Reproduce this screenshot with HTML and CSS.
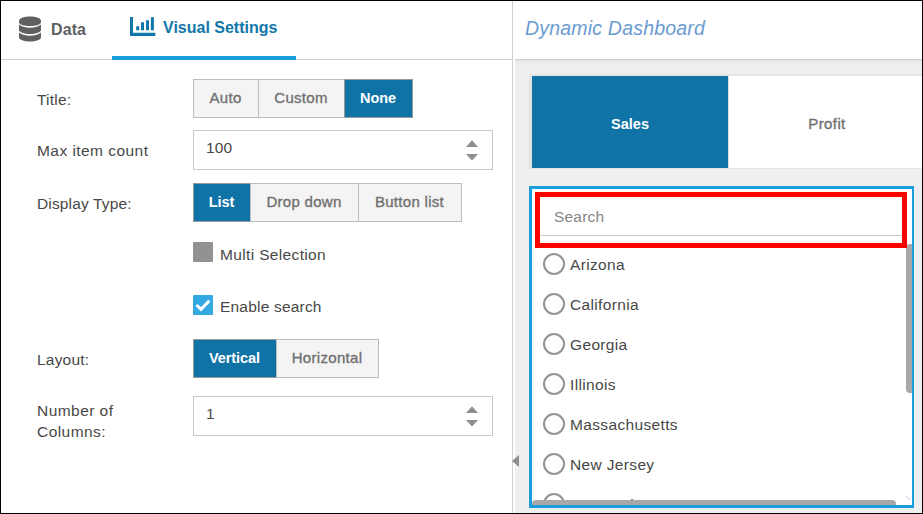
FILE: index.html
```html
<!DOCTYPE html>
<html lang="en">
<head>
<meta charset="utf-8">
<title>Dynamic Dashboard</title>
<link rel="stylesheet" href="styles.css">
</head>
<body>
<div class="app">
  <section class="settings">
    <nav class="tabs">
      <div class="tab tab-data">
        <svg width="24" height="26" viewBox="0 0 24 26" fill="#606060">
          <path d="M1 5C1 2 6 .4 12 .4S23 2 23 5v1.2C23 8.600 18 10 12 10S1 8.600 1 6.200Z"/>
          <path d="M1 8.600C3 10.700 7 11.700 12 11.700s9-1 11-3.100v5.200c0 2.700-5 4.200-11 4.200S1 16.500 1 13.800Z"/>
          <path d="M1 16.600c2 2.100 6 3.100 11 3.100s9-1 11-3.100v4.700c0 2.700-5 4.200-11 4.200S1 24 1 21.300Z"/>
        </svg>
        <span>Data</span>
      </div>
      <div class="tab tab-visual">
        <svg width="26" height="20" viewBox="0 0 26 20" fill="#1177aa">
          <path d="M0 1h3v15.800h22.300V20H0ZM6.200 10.300h3V14.300h-3ZM11 6.300h3v8h-3ZM16 4.300h3v10h-3ZM20.900 1.300h3v13h-3Z"/>
        </svg>
        <span>Visual Settings</span>
      </div>
    </nav>
    <div class="form">
      <div class="row row-title">
        <label>Title:</label>
        <div class="group"><button class="auto">Auto</button><button class="custom">Custom</button><button class="none on">None</button></div>
      </div>
      <div class="row row-max">
        <label>Max item count</label>
        <div class="number"><span>100</span><svg width="12" height="21" viewBox="0 0 12 21" fill="#8e8e8e"><path d="M6 .2 12 7H0ZM0 14h12l-6 6.500Z"/></svg></div>
      </div>
      <div class="row row-type">
        <label>Display Type:</label>
        <div class="group"><button class="list on">List</button><button class="drop">Drop down</button><button class="blist">Button list</button></div>
      </div>
      <div class="row row-multi">
        <span class="check"></span><span class="check-label">Multi Selection</span>
      </div>
      <div class="row row-search">
        <span class="check checked"><svg width="20" height="20" viewBox="0 0 20 20" fill="none" stroke="#fff" stroke-width="3"><path d="m3.500 10 4.500 4.400 8.300-8.600"/></svg></span><span class="check-label">Enable search</span>
      </div>
      <div class="row row-layout">
        <label>Layout:</label>
        <div class="group"><button class="vert on">Vertical</button><button class="horiz">Horizontal</button></div>
      </div>
      <div class="row row-cols">
        <label>Number of<br>Columns:</label>
        <div class="number"><span>1</span><svg width="12" height="21" viewBox="0 0 12 21" fill="#8e8e8e"><path d="M6 .2 12 7H0ZM0 14h12l-6 6.500Z"/></svg></div>
      </div>
    </div>
  </section>
  <main class="preview">
    <svg class="collapse" width="7" height="12" viewBox="0 0 7 12"><path d="M7 0v12L0 6Z" fill="#8e8e8e"/></svg>
    <header>Dynamic Dashboard</header>
    <div class="canvas">
      <div class="switch">
        <div class="sales">Sales</div>
        <div class="profit">Profit</div>
      </div>
      <div class="widget">
        <div class="search">Search</div>
        <ul>
          <li><i></i>Arizona</li>
          <li><i></i>California</li>
          <li><i></i>Georgia</li>
          <li><i></i>Illinois</li>
          <li><i></i>Massachusetts</li>
          <li><i></i>New Jersey</li>
          <li><i></i>New York</li>
        </ul>
        <div class="vbar"></div>
        <div class="hbar"></div>
        <svg class="grip" width="4" height="4" viewBox="0 0 4 4"><path d="M0 0 4 4" stroke="#c9c9ef"/></svg>
        <div class="highlight"></div>
      </div>
    </div>
  </main>
</div>
</body>
</html>
```

FILE: styles.css
```css
* { box-sizing: border-box; }
body { margin: 0; font: 15.500px/21px "Liberation Sans", Arial, sans-serif; color: #484848; }
svg { display: block; flex: none; }

.app { display: flex; width: 923px; height: 514px; border: 1px solid #000; background: #fff; overflow: hidden; }

.settings { width: 512px; flex: none; border-right: 1px solid #d0d0d0; }
.tabs { display: flex; height: 59px; border-bottom: 1px solid #ccc; }
.tab { display: flex; height: 59px; font-weight: bold; font-size: 16px; }
.tab-data { width: 111px; padding: 15px 0 0 17px; gap: 9px; color: #606060; }
.tab-data span { padding-top: 3px; letter-spacing: .1px; }
.tab-visual { width: 184px; padding: 15px 0 0 18px; gap: 7px; color: #1177aa; border-bottom: 4px solid #189edc; }
.tab-visual span { padding-top: 1px; white-space: nowrap; }

.form { padding: 19px 0 0 36px; }
.row { display: flex; align-items: flex-start; }
.row label { width: 156px; flex: none; padding-top: 10px; letter-spacing: .45px; white-space: nowrap; }
.row-title { height: 51px; }
.row-max { height: 53px; }
.row-type { height: 59px; }
.row-multi { height: 53px; padding-left: 156px; }
.row-search { height: 44px; padding-left: 156px; }
.row-layout { height: 57px; }
.row-cols label { padding-top: 4px; }
.row-type label { letter-spacing: .15px; }
.row-title label, .row-layout label { letter-spacing: .2px; }

.group { display: flex; }
.group button { height: 39px; padding: 0 1px 1px 0; margin: 0; font: 15px/20px "Liberation Sans", Arial, sans-serif; letter-spacing: .3px; color: #707070; background: #f4f4f4; border: 1px solid #bdbdbd; border-right-width: 0; -webkit-text-stroke: .35px #707070; white-space: nowrap; }
.group button:last-child { border-right-width: 1px; }
.group button.on { color: #fff; background: #0f73a6; border-color: #999; font-weight: bold; font-size: 14.5px; letter-spacing: -.1px; -webkit-text-stroke: 0; }
.auto { width: 65px; }
.custom { width: 86px; }
.none { width: 69px; }
.list { width: 57px; }
.drop { width: 108px; }
.blist { width: 104px; }
.vert { width: 83px; }
.horiz { width: 103px; }

.number { display: flex; justify-content: space-between; width: 300px; height: 40px; padding: 6px 14px 0 12px; border: 1px solid #c8c8c8; letter-spacing: .1px; }
.number svg { margin-top: 3px; }
.check { width: 20px; height: 20px; flex: none; background: #929292; border-radius: 1px; }
.checked { background: #34a8e0; }
.check-label { padding: 2px 0 0 7px; letter-spacing: .35px; }
.row-search .check-label { padding-top: 1px; letter-spacing: .2px; }

.preview { position: relative; flex: 1; padding-left: 2px; background: #fff; }
.preview header { height: 59px; padding: 15px 0 0 10px; font-size: 19.500px; line-height: 24px; font-style: italic; letter-spacing: .2px; color: #6b9bd1; border-bottom: 1px solid #ccc; }
.canvas { height: 453px; padding: 14px 0 0 14px; background: linear-gradient(#e5e5e5, #efefef 5px); }
.collapse { position: absolute; left: -1px; top: 454px; }
.switch { display: flex; height: 95px; border: 1px solid #e3e3e3; border-width: 2px 0 1px 3px; line-height: 96px; text-align: center; }
.sales { width: 196px; color: #fff; background: #0f73a6; font-weight: bold; font-size: 14.500px; }
.profit { flex: 1; padding-left: 3px; background: #fff; font-size: 15px; color: #707070; letter-spacing: .4px; -webkit-text-stroke: .35px #707070; border-left: 1px solid #ddd; }

.widget { position: relative; width: 385px; height: 322px; margin-top: 17px; padding-left: 8px; border: 3px solid #189edc; border-right-width: 2px; background: #fff; overflow: hidden; }
.search { width: 362px; height: 47px; padding: 17px 0 0 14px; border-bottom: 1px solid #c8c8c8; color: #858585; letter-spacing: .2px; }
.widget ul { margin: 8px 0 0; padding: 0; list-style: none; }
.widget li { display: flex; align-items: center; height: 40px; padding-left: 3px; letter-spacing: .35px; color: #484848; }
.widget i { width: 22px; height: 22px; margin-right: 5px; border: 2px solid #929292; border-radius: 50%; }
.vbar { position: absolute; right: 0; top: 55px; width: 6px; height: 149px; background: #a8a8a8; border-radius: 4px 0 0 4px; }
.hbar { position: absolute; left: 0; bottom: 0; width: 364px; height: 5px; background: #a8a8a8; border-radius: 4px 4px 0 0; }
.grip { position: absolute; right: 2px; bottom: 5px; }
.highlight { position: absolute; left: 3px; top: 3px; width: 372px; height: 56px; border: 5px solid #f00; }
```
